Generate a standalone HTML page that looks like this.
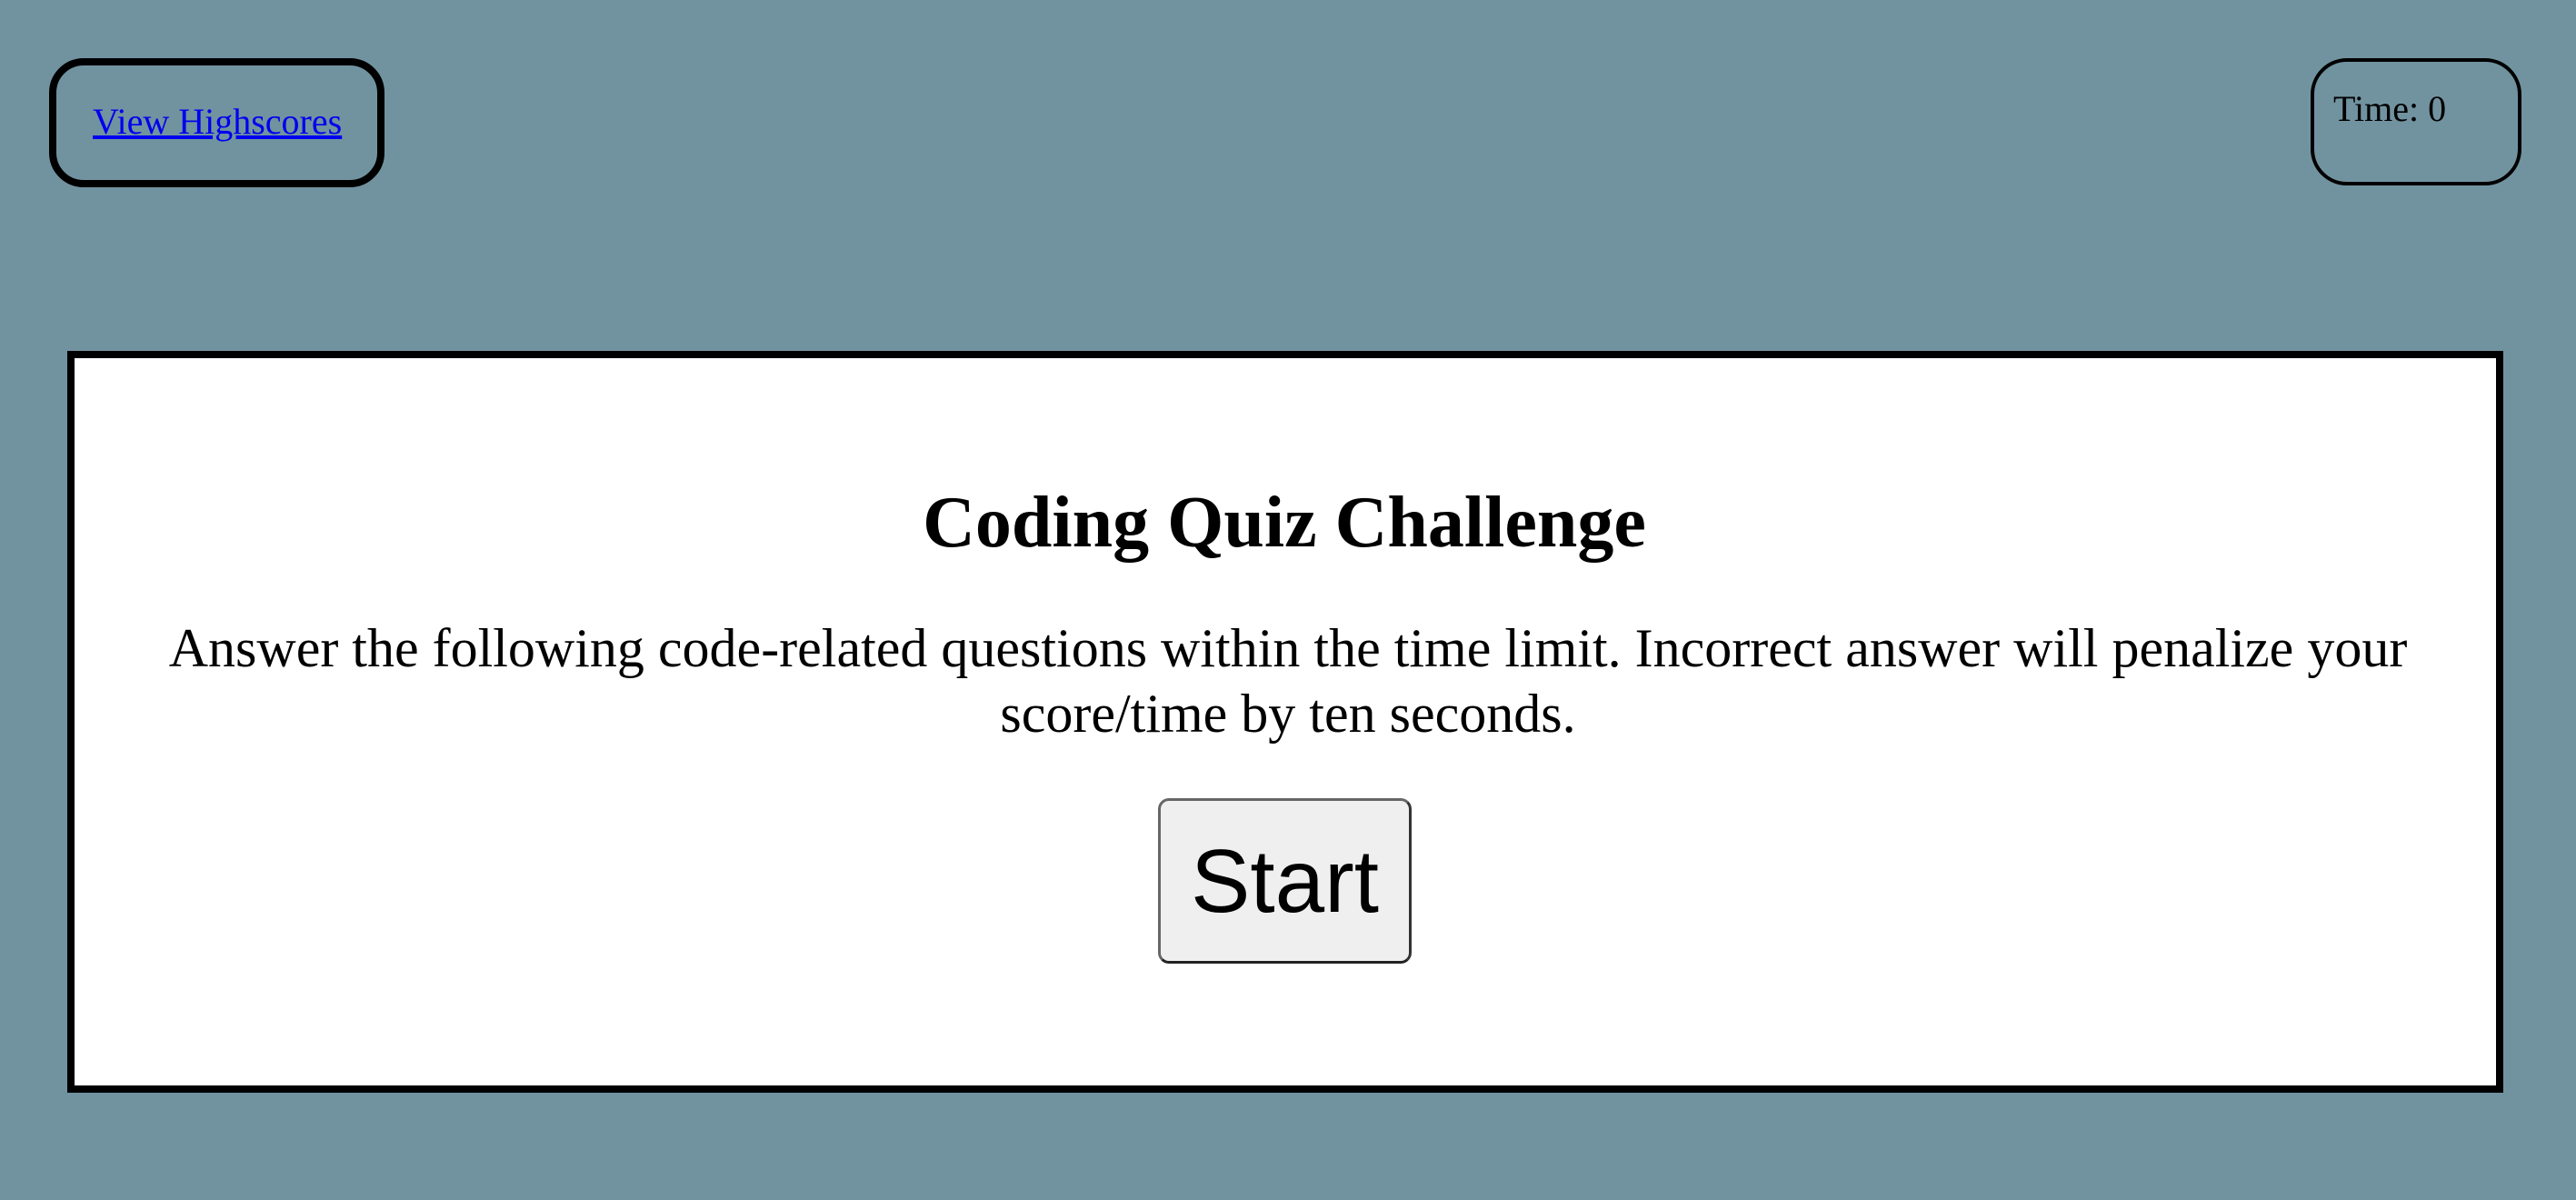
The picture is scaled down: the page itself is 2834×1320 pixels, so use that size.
<!DOCTYPE html>
<html><head><meta charset="utf-8"><style>
html,body{margin:0;padding:0;width:2834px;height:1320px;overflow:hidden;background:#7193a0;font-family:"Liberation Serif",serif;}
.hs{position:absolute;left:54px;top:64px;width:369px;height:142px;box-sizing:border-box;border:8px solid #000;border-radius:38px;}
.hs a{position:absolute;left:40px;top:39px;font-size:40px;line-height:46px;color:#0000ee;text-decoration:underline;white-space:nowrap;}
.tm{position:absolute;left:2542px;top:64px;width:232px;height:140px;box-sizing:border-box;border:4px solid #000;border-radius:40px;}
.tm span{position:absolute;left:21px;top:29px;font-size:40px;line-height:46px;color:#000;white-space:nowrap;}
.box{position:absolute;left:74px;top:386px;width:2680px;height:816px;box-sizing:border-box;border:8px solid #000;background:#fff;}
h1{position:absolute;left:-4px;top:529px;width:2834px;margin:0;text-align:center;font-size:80px;line-height:92px;font-weight:bold;white-space:nowrap;}
p{position:absolute;left:0;top:677px;width:2834px;margin:0;text-align:center;font-size:60px;line-height:72px;white-space:nowrap;}
.btn{position:absolute;left:1274px;top:878px;width:279px;height:182px;box-sizing:border-box;border:3px solid #666;border-bottom-color:#222;border-right-color:#333;border-radius:12px;background:#efefef;font-family:"Liberation Sans",sans-serif;font-size:98px;line-height:176px;text-align:center;color:#000;}
</style></head><body>
<div class="hs"><a href="#">View Highscores</a></div>
<div class="tm"><span>Time: 0</span></div>
<div class="box"></div>
<h1>Coding Quiz Challenge</h1>
<p>Answer the following code-related questions within the time limit. Incorrect answer will penalize your<br>score/time by ten seconds.</p>
<div class="btn">Start</div>
</body></html>
